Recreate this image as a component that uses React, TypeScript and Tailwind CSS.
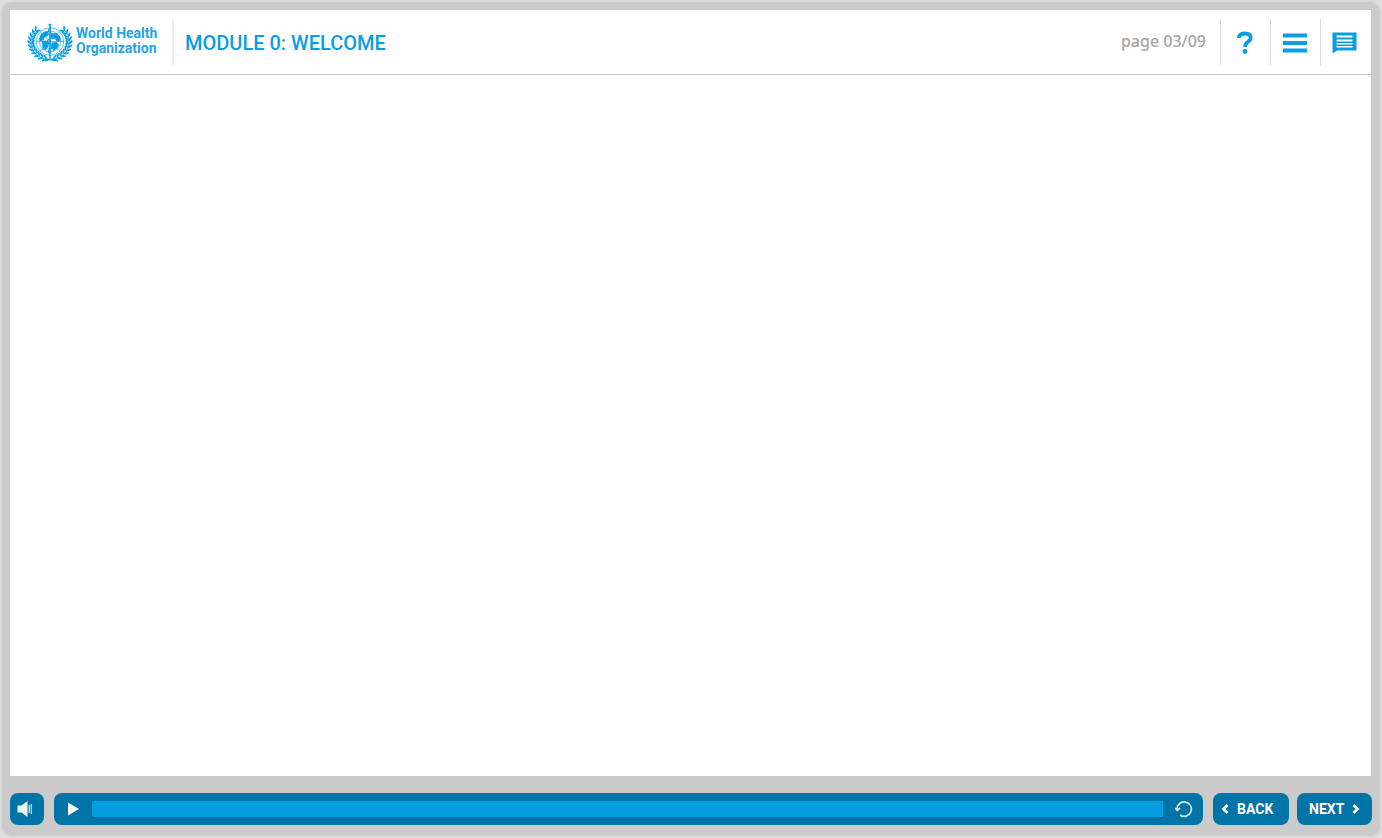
import React from "react";

const blue = "#0a9fe2";

function leafRing() {
  const leaves: { x: number; y: number; a: number }[] = [];
  for (let i = 0; i < 11; i++) {
    const a = 102 + i * 12;
    const t = (a * Math.PI) / 180;
    leaves.push({ x: 46 + Math.cos(t) * 38, y: 40 + Math.sin(t) * 34, a });
  }
  return leaves;
}

function Laurel() {
  return (
    <g>
      <path d="M44 75C22 74 8 60 8 40c0-9 3-17 9-24" fill="none" stroke={blue} strokeWidth="1.500" />
      {leafRing().map((l) => (
        <g key={l.a} transform={`translate(${l.x} ${l.y}) rotate(${l.a})`} fill={blue}>
          <ellipse cx="3" cy="3" rx="5.500" ry="2" transform="rotate(50 3 3)" />
          <ellipse cx="-4" cy="3" rx="5.500" ry="2" transform="rotate(125 -4 3)" />
        </g>
      ))}
    </g>
  );
}

function Emblem() {
  return (
    <svg viewBox="0 0 92 82" className="h-[41px] w-[46px] shrink-0" aria-hidden="true">
      <Laurel />
      <g transform="matrix(-1 0 0 1 92 0)">
        <Laurel />
      </g>
      <circle cx="46" cy="39" r="29" fill="white" />
      <g fill="none" stroke={blue} strokeWidth="1.3">
        <circle cx="46" cy="39" r="27.500" />
        <circle cx="46" cy="39" r="21" />
        <circle cx="46" cy="39" r="14" />
        <path d="M46 11v56M18 39h56M26 19l40 40M66 19L26 59" />
      </g>
      <g fill={blue}>
        <path d="M33 20l8-2 3 5-4 6-5 1-2 6-6 3-3-5 3-8z" />
        <path d="M50 23l9-1 7 7 2 8-8 2-5-6-6 1-3-6z" />
        <path d="M30 39l8-2 6 5-1 7-7 8-5-6z" />
        <path d="M50 41l8-1 6 5-3 7-8 6-5-7z" />
        <path d="M34 76c5-4 8-4 12-1 4-3 7-3 12 1l-3 3-9-3-9 3z" />
        <circle cx="46" cy="6" r="3" />
      </g>
      <path
        d="M48 12c-6 2-7 6-2 9 7 4 7 8 0 12-7 4-7 8 0 11 6 3 6 7 0 10-4 3-4 6 0 9"
        fill="none"
        stroke={blue}
        strokeWidth="2.6"
      />
      <path d="M46 4v72" stroke={blue} strokeWidth="3" />
    </svg>
  );
}

function HelpIcon() {
  return (
    <svg viewBox="0 0 16 24" className="h-6 w-4" aria-hidden="true">
      <path
        d="M1.800 7C2.200 3.600 4.600 2.500 8 2.500c3.600 0 5.700 1.500 5.700 4.200 0 2.200-1.300 3.200-3 4.300C8.900 12.200 8.200 13 8.200 16"
        fill="none"
        stroke={blue}
        strokeWidth="3.8"
      />
      <circle cx="8" cy="20.500" r="2.400" fill={blue} />
    </svg>
  );
}

function MenuIcon() {
  return (
    <svg viewBox="0 0 24 20" className="h-5 w-6" fill={blue} aria-hidden="true">
      <path d="M0 0.500h24v4H0zM0 8h24v4H0zM0 15.500h24v4H0z" />
    </svg>
  );
}

function NotesIcon() {
  return (
    <svg viewBox="0 0 25 22" className="h-[22px] w-[25px]" aria-hidden="true">
      <path d="M0.500 0.500h24v18H5l-4.500 3z" fill={blue} />
      <path d="M4.500 3.500h16v2h-16zM4.500 7.500h16v2h-16zM4.500 11h16v1.500h-16zM4.500 14h16v1.500h-16z" fill="white" />
    </svg>
  );
}

function Chevron({ back = false }: { back?: boolean }) {
  return (
    <svg viewBox="0 0 8 10" className="h-2.5 w-2" fill="none" stroke="white" strokeWidth="2.8" aria-hidden="true">
      <path d={back ? "M6.500 1L2.500 5l4 4" : "M1.500 1l4 4-4 4"} />
    </svg>
  );
}

const tool = "flex w-[50px] items-center justify-center border-l border-[#dedede] pt-0.5 pr-0.5";
const control = "flex h-8 items-center rounded-lg bg-[#0074a6]";

export default function App() {
  return (
    <div className="min-h-screen bg-[#dfdfdf] font-['Open_Sans',sans-serif]">
      <div className="flex min-h-screen flex-col rounded-xl border-2 border-[#dadada] bg-[#cbcbcb] px-2 pt-2 pb-[11px]">
        <main className="mr-px flex grow flex-col bg-white">
          <header className="flex h-[65px] items-center justify-between border-b border-[#cccccc]">
            <div className="flex items-center">
              <div className="flex h-[46px] items-center gap-[3px] border-r-2 border-[#eeeeee] pr-3 pl-[17px]">
                <Emblem />
                <p className="w-[84px] pb-0.5 font-['Roboto',sans-serif] text-sm leading-[15px] font-bold text-[#25a5df]">
                  World Health Organization
                </p>
              </div>
              <h1 className="pt-0.5 pl-[11px] font-['Roboto',sans-serif] text-xl leading-6 font-medium text-[#0a9fe2]">MODULE 0: WELCOME</h1>
            </div>
            <div className="flex h-[46px] pr-px">
              <p className="pt-2.5 pr-3.5 font-['Noto_Sans',sans-serif] text-base leading-6 font-medium text-[#a5a5a5]">page 03/09</p>
              <button type="button" aria-label="Help" className={tool}><HelpIcon /></button>
              <button type="button" aria-label="Menu" className={tool}><MenuIcon /></button>
              <button type="button" aria-label="Notes" className={tool}><NotesIcon /></button>
            </div>
          </header>
        </main>
        <footer className="mt-[17px] flex items-center">
          <button type="button" aria-label="Sound" className={`${control} w-[34px] pl-[7px]`}>
            <svg viewBox="0 0 16 16" className="size-4" aria-hidden="true">
              <path d="M0.500 4.500h4l6-4.500v16l-6-4.500h-4z" fill="#eef6fa" />
              <path d="M12.200 4v8M14.300 3v10" stroke="#a6d0e3" strokeWidth="1.500" />
            </svg>
          </button>
          <div className={`${control} mr-2.5 ml-2.5 grow pr-2.5 pl-3.5`}>
            <button type="button" aria-label="Play" className="mr-[13px]">
              <svg viewBox="0 0 11 14" className="h-3.5 w-[11px]" aria-hidden="true">
                <path d="M0 0.500L11 7 0 13.500z" fill="#f3f6f8" />
              </svg>
            </button>
            <input
              type="range"
              aria-label="Playback position"
              defaultValue={100}
              className="h-4 min-w-0 grow appearance-none rounded-l-xs bg-[#069de0] [&::-webkit-slider-thumb]:size-0 [&::-webkit-slider-thumb]:appearance-none"
            />
            <button type="button" aria-label="Replay" className="ml-3">
              <svg viewBox="0 0 18 18" className="size-[18px]" fill="none" stroke="#d3e8f1" strokeWidth="1.700" aria-hidden="true">
                <path d="M2 9.500A7.200 7.200 0 1 1 5 15" />
                <path d="M0 8l2.200 2.300L5 8" />
              </svg>
            </button>
          </div>
          <button type="button" className={`${control} mr-2 w-[76px] gap-2 pl-2 text-sm font-bold text-white font-['Roboto',sans-serif]`}>
            <Chevron back />
            BACK
          </button>
          <button type="button" className={`${control} w-[75px] gap-2 pl-3 text-sm font-bold text-white font-['Roboto',sans-serif]`}>
            NEXT
            <Chevron />
          </button>
        </footer>
      </div>
    </div>
  );
}
